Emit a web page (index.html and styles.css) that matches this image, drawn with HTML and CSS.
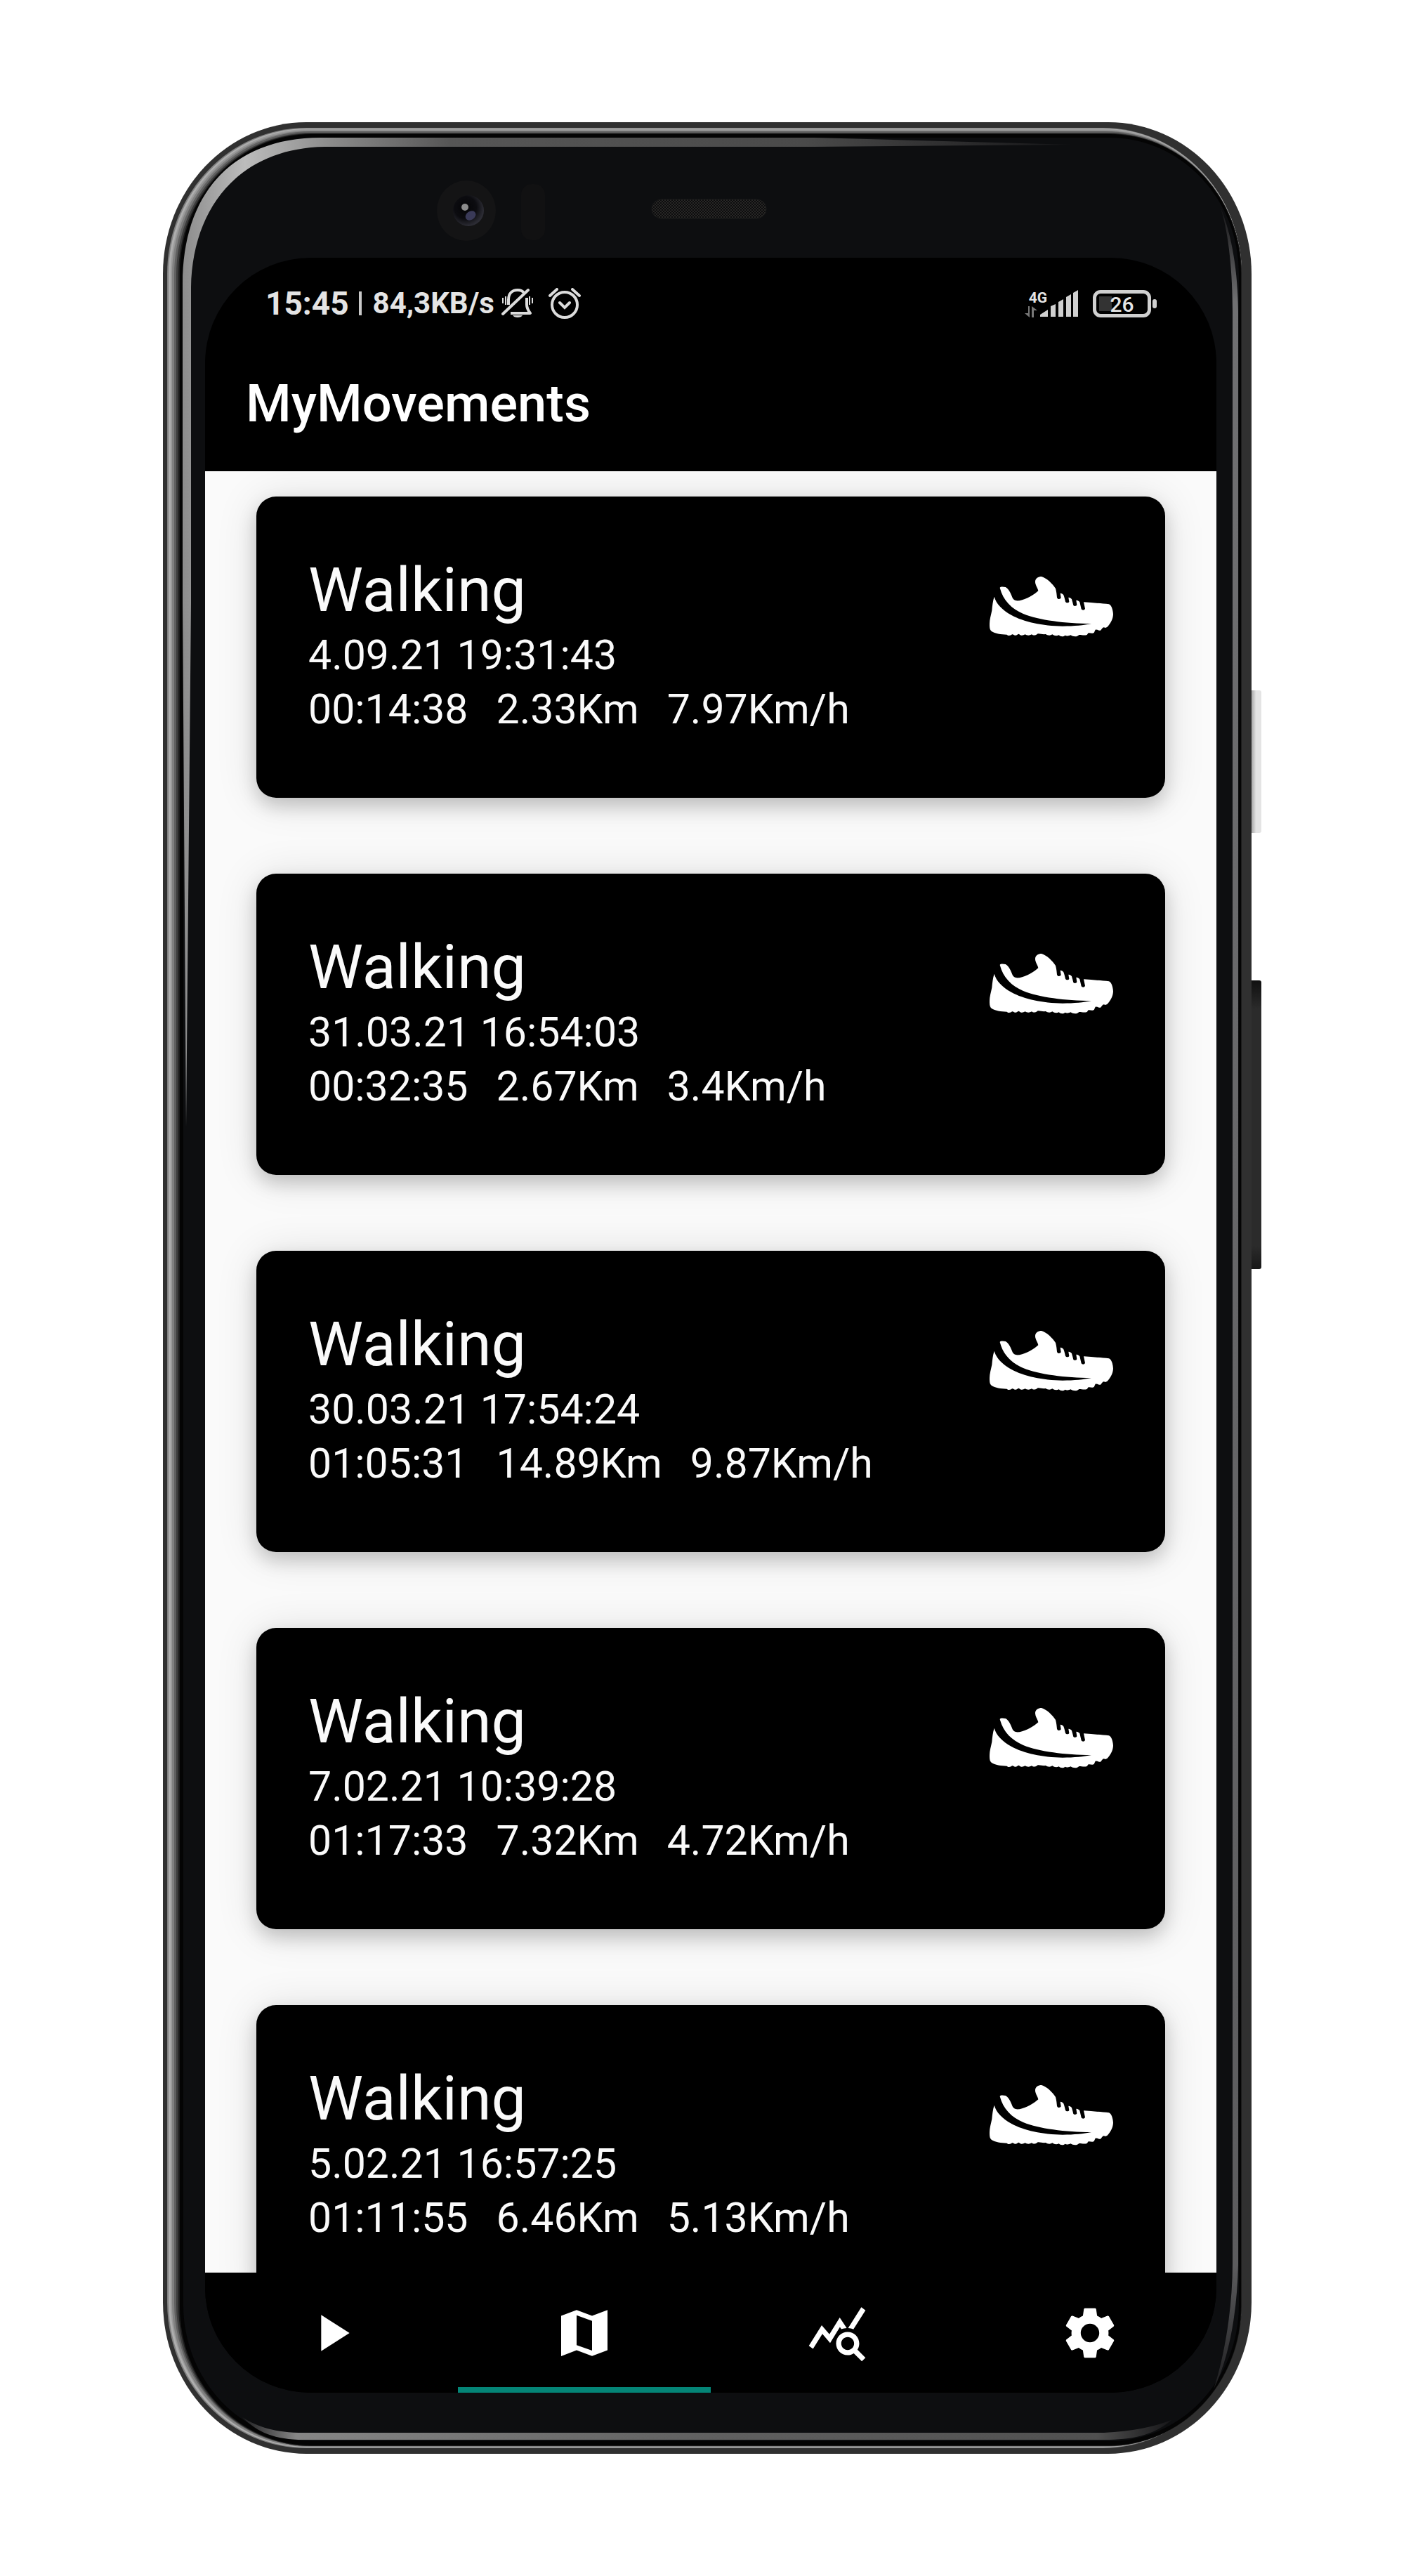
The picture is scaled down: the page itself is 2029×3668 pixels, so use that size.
FILE: index.html
```html
<!DOCTYPE html>
<html lang="en">
<head>
<meta charset="utf-8">
<meta name="viewport" content="width=device-width, initial-scale=1">
<title>MyMovements</title>
<link rel="stylesheet" href="styles.css">
</head>
<body>
<svg width="0" height="0" class="sprite" aria-hidden="true">
  <symbol id="shoe" viewBox="118 125 528 258">
    <path fill="currentColor" d="M138 211C146 240 172 268 212 290C262 318 345 336 430 337C480 337 520 333 553 326C440 325 330 312 262 284C212 262 176 228 162 173C164 167 176 168 186 170C196 174 206 190 212 206C218 224 226 230 246 228C276 222 306 204 326 186C324 174 312 160 313 146C314 132 326 125 340 125C360 130 388 156 400 176C404 190 405 204 406 214C408 223 420 223 423 216L420 196C426 196 431 199 434 204C438 214 440 224 442 232C446 239 456 238 458 232L455 214C463 215 467 218 469 222C472 232 474 240 476 248C480 253 489 252 491 246L488 226C496 227 501 230 503 234L510 264C514 270 524 269 526 262L520 234C556 237 596 240 628 243C638 246 645 266 646 286C645 306 636 324 620 341L612 344C606 340 602 342 598 348L592 355C584 356 578 350 570 352L564 365C556 370 548 364 540 366L534 374C522 378 512 374 500 374C492 384 474 382 464 375C454 381 444 377 440 376C434 383 420 382 414 375C404 380 394 378 386 372C378 378 366 377 358 371C346 373 334 368 324 369C316 377 304 378 298 372C290 378 276 377 270 372C260 378 250 378 244 370C238 370 234 378 226 376C220 374 218 370 214 372C208 378 196 378 192 373C166 372 142 368 126 358C118 352 118 340 118 326C118 310 124 290 128 270C130 250 132 228 138 211Z"/>
  </symbol>
</svg>

<div class="phone">
  <svg class="frame" viewBox="0 0 1550 3320" preserveAspectRatio="none" aria-hidden="true">
    <defs>
      <linearGradient id="top-glint" gradientUnits="userSpaceOnUse" x1="28" y1="0" x2="1295" y2="0">
        <stop offset="0" stop-color="#8c8c8c"/><stop offset=".07" stop-color="#bcbcbc"/>
        <stop offset=".17" stop-color="#8a8a8a"/><stop offset=".3" stop-color="#565656"/>
        <stop offset=".7" stop-color="#4a4a4a"/><stop offset="1" stop-color="#161618"/>
      </linearGradient>
      <linearGradient id="bottom-glint" gradientUnits="userSpaceOnUse" x1="110" y1="0" x2="1436" y2="0">
        <stop offset="0" stop-color="#1a1a1c"/><stop offset=".06" stop-color="#868686"/>
        <stop offset=".5" stop-color="#606060"/><stop offset=".92" stop-color="#505050"/><stop offset="1" stop-color="#161618"/>
      </linearGradient>
      <linearGradient id="side-glint" gradientUnits="userSpaceOnUse" x1="0" y1="130" x2="0" y2="3240">
        <stop offset="0" stop-color="#1a1a1c"/><stop offset=".04" stop-color="#707072"/>
        <stop offset=".94" stop-color="#5c5c5e"/><stop offset="1" stop-color="#1a1a1c"/>
      </linearGradient>
      <radialGradient id="lens" cx=".4" cy=".4" r=".6">
        <stop offset="0" stop-color="#050507"/><stop offset=".6" stop-color="#0c0c10"/><stop offset="1" stop-color="#2c2c34"/>
      </radialGradient>
      <pattern id="mesh" width="4" height="4" patternUnits="userSpaceOnUse">
        <rect width="4" height="4" fill="#0c0c0d"/><rect width="2" height="2" fill="#282726"/><rect x="2" y="2" width="2" height="2" fill="#282726"/>
      </pattern>
    </defs>
    <rect width="1550" height="3320" rx="204" ry="216" fill="#303030"/>
    <rect x="6" y="8" width="1530" height="3304" rx="198" ry="208" fill="#808080"/>
    <rect x="8" y="9" width="1528" height="3302" rx="197" ry="207" fill="#aeaeae"/>
    <rect x="11" y="10" width="1525" height="3300" rx="196" ry="206" fill="#9a9a9a"/>
    <rect x="13" y="12" width="1523" height="3298" rx="195" ry="205" fill="#808080"/>
    <rect x="16" y="13" width="1520" height="3296" rx="194" ry="204" fill="#606060"/>
    <rect x="19" y="15" width="1517" height="3294" rx="192" ry="202" fill="#3c3c3c"/>
    <rect x="22" y="16" width="1514" height="3293" rx="190" ry="200" fill="#1c1c1c"/>
    <rect x="24" y="17" width="1511" height="3291" rx="188" ry="198" fill="#040404"/>
    <rect x="29" y="22" width="1503" height="3280" rx="184" ry="194" fill="#0d0e10"/>
    <path fill="url(#top-glint)" d="M33 1430L28 684V230C28 100 100 22 225 22H928L1295 32L928 35H230C110 37 42 120 40 235V684Z"/>
    <path fill="url(#side-glint)" d="M1506 122C1522 160 1531 215 1531 270V3050C1530 3110 1520 3180 1496 3228C1512 3180 1523 3110 1523 3050V270C1523 215 1518 160 1506 122Z"/>
    <path fill="url(#bottom-glint)" d="M113 3268C135 3282 160 3290 200 3290H1340C1380 3288 1410 3282 1436 3272C1410 3294 1380 3300 1340 3300H200C160 3300 135 3290 113 3268Z"/>
    <ellipse cx="432" cy="126" rx="42" ry="43" fill="#141415"/>
    <circle cx="435" cy="126" r="22" fill="url(#lens)"/>
    <ellipse cx="438" cy="133" rx="8" ry="6" fill="#3a3a58" transform="rotate(-35 438 133)"/>
    <circle cx="430" cy="121" r="5" fill="#8c8c8c"/>
    <rect x="510" y="88" width="34" height="80" rx="15" fill="#111112"/>
    <rect x="696" y="110" width="163" height="27" rx="14" fill="url(#mesh)" stroke="#1c1c1c" stroke-width="1"/>
  </svg>
  <span class="key key-power"></span>
  <span class="key key-volume"></span>

  <div class="screen">
    <div class="status">
      <span class="clock">15:45</span>
      <span class="divider"></span>
      <span class="speed">84,3KB/s</span>
      <svg class="bell" viewBox="0 0 46 44" fill="none" stroke="#dcdcdc" stroke-width="4" aria-label="Silent">
        <path d="M10 24V17C10 8 15 3 23 3C27 3 30 4 32 7M36 14V24C36 29 38 32 41 36H13" stroke-linejoin="round"/>
        <path d="M2 37L38 3" stroke-linecap="round"/>
        <path d="M16 39H30C28 43 18 43 16 39Z" fill="#dcdcdc" stroke="none"/>
        <path d="M2 14V22M6 12V24M40 12V24M44 14V22" stroke-width="2"/>
      </svg>
      <svg class="alarm" viewBox="0 0 46 44" fill="none" stroke="#dcdcdc" stroke-width="4" aria-label="Alarm">
        <circle cx="23" cy="24" r="18"/>
        <path d="M16 21L23 28L30 21M2 11L12 2M44 11L34 2" stroke-linecap="round"/>
      </svg>
      <span class="network">
        <span class="network-type">4G</span>
        <svg class="arrows" viewBox="0 0 18 16" fill="#777" aria-hidden="true"><path d="M5 0H7V16L0 10H5ZM10 16V0L18 6H13V16Z"/></svg>
      </span>
      <svg class="signal" viewBox="0 0 54 38" fill="#d0d0d0" aria-label="Signal">
        <path d="M0 38V35L11 28V38ZM15 38V23L22 20V38ZM26 38V17L33 13V38ZM37 38V10L44 6V38ZM47 38V4L54 0V38Z"/>
      </svg>
      <span class="battery"><span class="level">26</span></span>
    </div>

    <header class="appbar"><h1>MyMovements</h1></header>

    <main class="list">
      <article class="card">
        <div class="info">
          <h2>Walking</h2>
          <p>4.09.21 19:31:43</p>
          <p class="stats"><span>00:14:38</span><span>2.33Km</span><span>7.97Km/h</span></p>
        </div>
        <svg class="shoe"><use href="#shoe"/></svg>
      </article>
      <article class="card">
        <div class="info">
          <h2>Walking</h2>
          <p>31.03.21 16:54:03</p>
          <p class="stats"><span>00:32:35</span><span>2.67Km</span><span>3.4Km/h</span></p>
        </div>
        <svg class="shoe"><use href="#shoe"/></svg>
      </article>
      <article class="card">
        <div class="info">
          <h2>Walking</h2>
          <p>30.03.21 17:54:24</p>
          <p class="stats"><span>01:05:31</span><span>14.89Km</span><span>9.87Km/h</span></p>
        </div>
        <svg class="shoe"><use href="#shoe"/></svg>
      </article>
      <article class="card">
        <div class="info">
          <h2>Walking</h2>
          <p>7.02.21 10:39:28</p>
          <p class="stats"><span>01:17:33</span><span>7.32Km</span><span>4.72Km/h</span></p>
        </div>
        <svg class="shoe"><use href="#shoe"/></svg>
      </article>
      <article class="card">
        <div class="info">
          <h2>Walking</h2>
          <p>5.02.21 16:57:25</p>
          <p class="stats"><span>01:11:55</span><span>6.46Km</span><span>5.13Km/h</span></p>
        </div>
        <svg class="shoe"><use href="#shoe"/></svg>
      </article>
    </main>

    <nav class="tabs">
      <button type="button" class="tab" aria-label="Start">
        <svg viewBox="0 0 24 24"><path d="M8 5v14l11-7z"/></svg>
      </button>
      <button type="button" class="tab active" aria-label="Map" aria-current="page">
        <svg viewBox="0 0 24 24"><path d="M15 5.3 9 3.1 3 5.3V21l6-2.3 6 2.2 6-2.2V3.1zm0 13.5-6-2.1V5.1l6 2.2z"/></svg>
      </button>
      <button type="button" class="tab" aria-label="Statistics">
        <svg viewBox="0 0 24 24"><path d="M19.88 18.47c.44-.7.7-1.51.7-2.39 0-2.49-2.01-4.5-4.5-4.5s-4.5 2.01-4.5 4.5 2.01 4.5 4.49 4.5c.88 0 1.7-.26 2.39-.7L21.58 23 23 21.58l-3.12-3.11zm-3.8.11c-1.38 0-2.5-1.12-2.5-2.5s1.12-2.5 2.5-2.5 2.5 1.12 2.5 2.5-1.12 2.5-2.5 2.5zm-.36-8.5c-.74.02-1.45.18-2.1.45l-.55-.83-3.8 6.18-3.01-3.52-3.63 5.81L1 17l5-8 3 3.5L13 6l2.72 4.08zm2.59.5c-.64-.28-1.33-.45-2.05-.49L21.38 2 23 3.18l-4.69 7.4z"/></svg>
      </button>
      <button type="button" class="tab" aria-label="Settings">
        <svg viewBox="0 0 24 24"><path d="M19.14 12.94c.04-.3.06-.61.06-.94 0-.32-.02-.64-.07-.94l2.03-1.58c.18-.14.23-.41.12-.61l-1.92-3.32c-.12-.22-.37-.29-.59-.22l-2.39.96c-.5-.38-1.03-.7-1.62-.94l-.36-2.54c-.04-.24-.24-.41-.48-.41h-3.84c-.24 0-.43.17-.47.41l-.36 2.54c-.59.24-1.13.57-1.62.94l-2.39-.96c-.22-.08-.47 0-.59.22L2.74 8.87c-.12.21-.08.47.12.61l2.03 1.58c-.05.3-.09.63-.09.94s.02.64.07.94l-2.03 1.58c-.18.14-.23.41-.12.61l1.92 3.32c.12.22.37.29.59.22l2.39-.96c.5.38 1.03.7 1.62.94l.36 2.54c.05.24.24.41.48.41h3.84c.24 0 .44-.17.47-.41l.36-2.54c.59-.24 1.13-.56 1.62-.94l2.39.96c.22.08.47 0 .59-.22l1.92-3.32c.12-.22.07-.47-.12-.61l-2.01-1.58zM12 15.6c-1.98 0-3.6-1.62-3.6-3.6s1.62-3.6 3.6-3.6 3.6 1.62 3.6 3.6-1.62 3.6-3.6 3.6z"/></svg>
      </button>
    </nav>
  </div>
</div>
</body>
</html>
```
FILE: styles.css
```css
* { box-sizing: border-box; margin: 0; padding: 0; }

body {
  background: #fff;
  padding: 174px 232px;
  font-family: Roboto, "Liberation Sans", sans-serif;
  color: #fff;
}

.sprite { position: absolute; }

/* Device */
.phone {
  position: relative;
  margin-right: 15px;
  padding: 193px 50px 87px 60px;
}
.frame { position: absolute; inset: 0; width: 100%; height: 100%; }

.key { position: absolute; left: 100%; width: 14px; border-radius: 0 3px 3px 0; }
.key-power {
  top: 809px;
  height: 203px;
  background: linear-gradient(90deg, #a8a8a8, #c8c8c8 25%, #e4e4e4 45%);
}
.key-volume {
  top: 1222px;
  height: 411px;
  background: linear-gradient(#101010, #2b2b2b 10%, #2b2b2b 92%, #181818);
}

.screen {
  position: relative;
  display: flex;
  flex-direction: column;
  aspect-ratio: 1440 / 3040;
  border-radius: 150px;
  overflow: hidden;
  background: #000;
}

/* Status bar */
.status {
  display: flex;
  align-items: center;
  flex: none;
  height: 130px;
  padding: 0 85px 0 86px;
  color: #e4e4e4;
}
.clock { font-size: 46px; line-height: 56px; font-weight: 700; }
.divider { width: 4px; height: 34px; margin: 0 16px 0 14px; background: #c8c8c8; }
.speed { font-size: 42px; line-height: 56px; font-weight: 700; }
.bell { width: 46px; height: 44px; margin-left: 10px; }
.alarm { width: 46px; height: 44px; margin-left: 21px; }
.network {
  display: flex;
  flex-direction: column;
  align-items: flex-start;
  margin-left: auto;
}
.network-type { font-size: 21px; line-height: 24px; font-weight: 700; padding-left: 6px; }
.arrows { width: 18px; height: 16px; }
.signal { width: 54px; height: 38px; margin: 0 21px 0 -10px; }
.battery {
  position: relative;
  width: 83px;
  height: 39px;
  margin-right: 8px;
  border: 5px solid #d0d0d0;
  border-radius: 11px;
  background: linear-gradient(#333, #333) 4px center / 18px 21px no-repeat;
}
.battery::after {
  content: "";
  position: absolute;
  left: 80px;
  top: 8px;
  width: 6px;
  height: 13px;
  border-radius: 3px;
  background: #d0d0d0;
}
.level { display: block; text-align: center; font-size: 30px; line-height: 31px; font-weight: 500; }

/* App bar */
.appbar {
  display: flex;
  align-items: center;
  flex: none;
  height: 174px;
  padding: 0 58px 18px;
}
.appbar h1 { font-size: 74px; line-height: 88px; font-weight: 500; }

/* Activity list */
.list {
  flex: 1;
  min-height: 0;
  display: flex;
  flex-direction: column;
  gap: 108px;
  padding: 36px 73px;
  overflow-y: auto;
  scrollbar-width: none;
  background: #fafafa;
}
.card {
  display: flex;
  justify-content: space-between;
  align-items: flex-start;
  flex: none;
  padding: 78px 74px 88px;
  border-radius: 28px;
  background: #000;
  box-shadow: 0 12px 26px rgba(0, 0, 0, .18), 0 4px 60px rgba(0, 0, 0, .12);
  color: #fafafa;
}
.card h2 { font-size: 88px; line-height: 109px; font-weight: 400; }
.card p { font-size: 59px; line-height: 77px; }
.card .stats { display: flex; gap: 40px; }
.shoe { width: 176px; height: 86px; margin-top: 36px; color: #fff; }

/* Tabs */
.tabs {
  display: grid;
  grid-template-columns: repeat(4, 1fr);
  flex: none;
  height: 171px;
  background: #000;
}
.tab {
  display: flex;
  align-items: center;
  justify-content: center;
  border: 0;
  background: none;
  color: #fff;
}
.tab svg { width: 88px; height: 88px; fill: currentColor; }
.tab.active { box-shadow: inset 0 -8px #048577; }
```
